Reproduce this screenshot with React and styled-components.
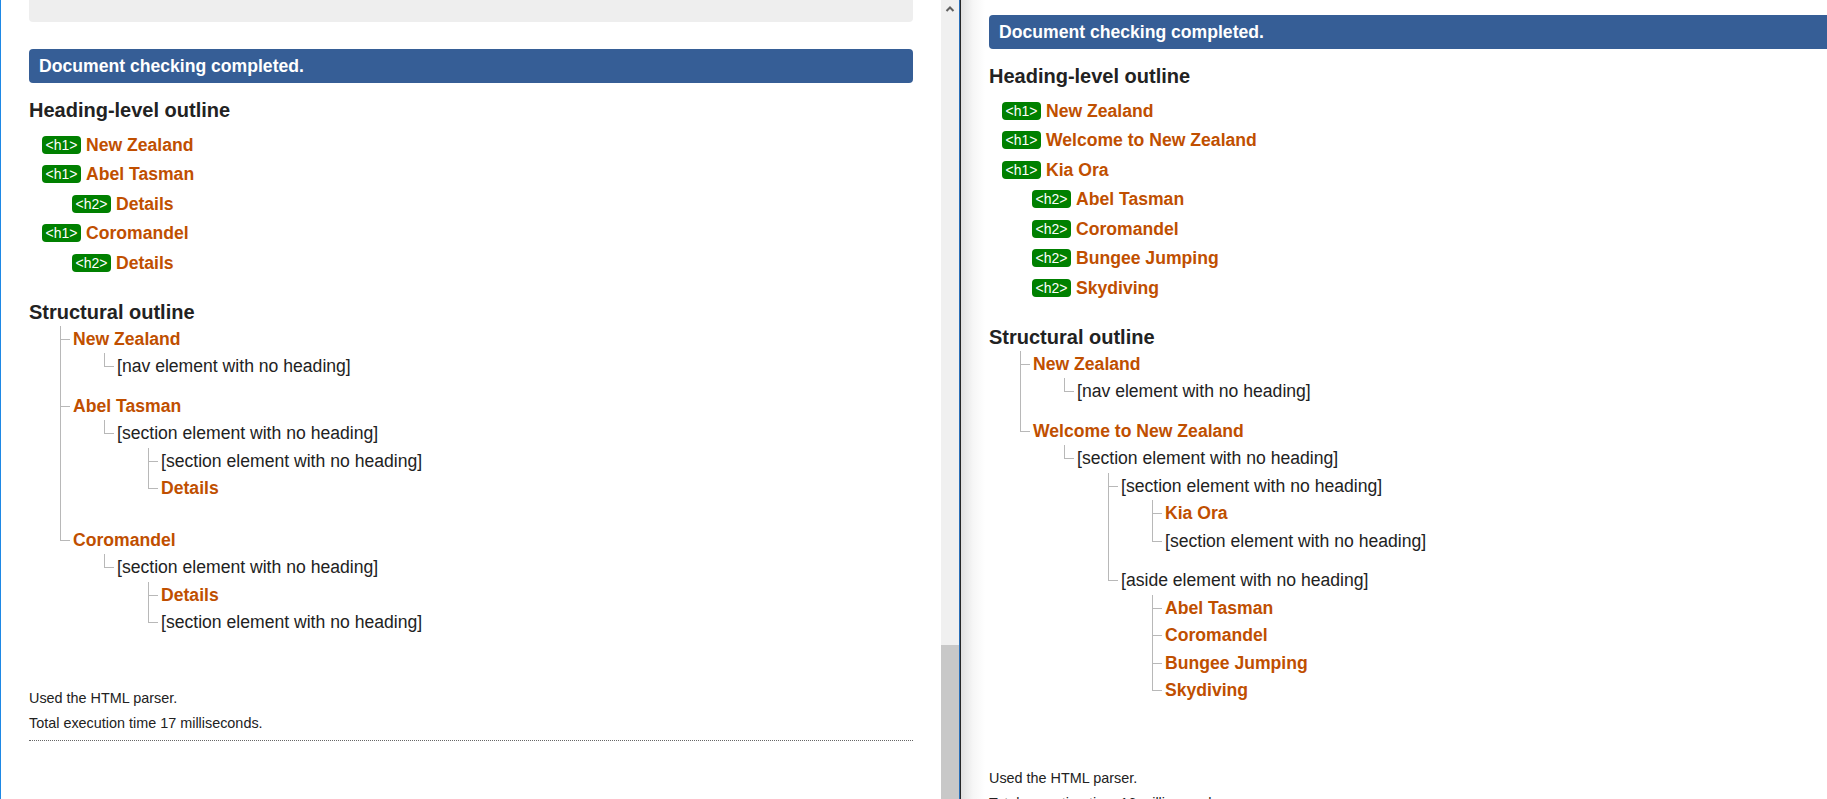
import styled, { createGlobalStyle } from "styled-components";

const leftHeadings = [
    { level: 1, text: "New Zealand" },
    { level: 1, text: "Abel Tasman" },
    { level: 2, text: "Details" },
    { level: 1, text: "Coromandel" },
    { level: 2, text: "Details" },
];

const rightHeadings = [
    { level: 1, text: "New Zealand" },
    { level: 1, text: "Welcome to New Zealand" },
    { level: 1, text: "Kia Ora" },
    { level: 2, text: "Abel Tasman" },
    { level: 2, text: "Coromandel" },
    { level: 2, text: "Bungee Jumping" },
    { level: 2, text: "Skydiving" },
];

const NO_SECTION = "[section element with no heading]";

const leftTree = [
    { h: "New Zealand", children: [{ t: "[nav element with no heading]" }] },
    {
        h: "Abel Tasman",
        children: [{ t: NO_SECTION, children: [{ t: NO_SECTION }, { h: "Details" }] }],
    },
    {
        h: "Coromandel",
        children: [{ t: NO_SECTION, children: [{ h: "Details" }, { t: NO_SECTION }] }],
    },
];

const rightTree = [
    { h: "New Zealand", children: [{ t: "[nav element with no heading]" }] },
    {
        h: "Welcome to New Zealand",
        children: [
            {
                t: NO_SECTION,
                children: [
                    { t: NO_SECTION, children: [{ h: "Kia Ora" }, { t: NO_SECTION }] },
                    {
                        t: "[aside element with no heading]",
                        children: [
                            { h: "Abel Tasman" },
                            { h: "Coromandel" },
                            { h: "Bungee Jumping" },
                            { h: "Skydiving" },
                        ],
                    },
                ],
            },
        ],
    },
];

function Tree({ items, root }) {
    return (
        <TreeList $root={root}>
            {items.map((item, i) => (
                <TreeItem key={i}>
                    <OutlineLabel $heading={!!item.h}>{item.h || item.t}</OutlineLabel>
                    {item.children && <Tree items={item.children} />}
                </TreeItem>
            ))}
        </TreeList>
    );
}

function Report({ headings, tree, time, bleed }) {
    return (
        <>
            <StatusBar $bleed={bleed}>Document checking completed.</StatusBar>

            <SectionTitle $top={15}>Heading-level outline</SectionTitle>
            <HeadingList>
                {headings.map((h, i) => (
                    <HeadingRow key={i} $level={h.level}>
                        <Badge>&lt;h{h.level}&gt;</Badge>
                        <HeadingText>{h.text}</HeadingText>
                    </HeadingRow>
                ))}
            </HeadingList>

            <SectionTitle $top={22}>Structural outline</SectionTitle>
            <Tree items={tree} root />

            <Footer>
                <p>Used the HTML parser.</p>
                <p>Total execution time {time} milliseconds.</p>
            </Footer>
        </>
    );
}

export default function App() {
    return (
        <Window>
            <GlobalStyle />

            <LeftFrame>
                <LeftDoc>
                    <PrevPanel />
                    <Report headings={leftHeadings} tree={leftTree} time={17} />
                </LeftDoc>
                <Scrollbar>
                    <ScrollArrow>
                        <svg width="10" height="8" viewBox="0 0 10 8">
                            <path d="M1.5 6 L5 2.5 L8.5 6" fill="none" stroke="#606060" strokeWidth="2" />
                        </svg>
                    </ScrollArrow>
                    <ScrollThumb />
                </Scrollbar>
            </LeftFrame>

            <Divider />

            <RightDoc>
                <Report headings={rightHeadings} tree={rightTree} time={16} bleed />
            </RightDoc>
        </Window>
    );
}

const GlobalStyle = createGlobalStyle`
    html, body {
        margin: 0;
        padding: 0;
        height: 100%;
        overflow: hidden;
        background: #fff;
    }

    body {
        font-family: "Liberation Sans", Arial, sans-serif;
        color: #222;
    }
`;

const Window = styled.div`
    display: flex;
    width: 100vw;
    height: 100vh;
    overflow: hidden;
`;

const LeftFrame = styled.div`
    display: flex;
    width: 959px;
    flex-shrink: 0;
`;

const LeftDoc = styled.div`
    flex: 1;
    border-left: 1px solid #1e88e5;
    padding: 0 28px;
    overflow: hidden;
`;

const Scrollbar = styled.div`
    width: 18px;
    background: #f0f0f0;
    display: flex;
    flex-direction: column;
`;

const ScrollArrow = styled.div`
    height: 17px;
    display: flex;
    align-items: center;
    justify-content: center;
`;

const ScrollThumb = styled.div`
    margin-top: auto;
    height: 154px;
    background: #c8c8c8;
`;

const Divider = styled.div`
    width: 1px;
    flex-shrink: 0;
    background: #2a6fb8;
`;

const RightDoc = styled.div`
    flex: 1;
    min-width: 0;
    border-left: 1px solid #262626;
    background: linear-gradient(to right, #e0e0e0, #f6f6f6 12px, #fff 24px);
    padding: 15px 0 0 28px;
    overflow: hidden;
`;

const PrevPanel = styled.div`
    height: 22px;
    background: #eeeeee;
    border-radius: 0 0 4px 4px;
    margin-bottom: 27px;
`;

const StatusBar = styled.div`
    height: 34px;
    display: flex;
    align-items: center;
    padding: 0 10px;
    margin-right: ${p => (p.$bleed ? "-10px" : "0")};
    background: #365e96;
    border-radius: 4px;
    color: #fff;
    font-size: 17.6px;
    font-weight: bold;
`;

const SectionTitle = styled.h2`
    margin: ${p => p.$top}px 0 0;
    font-size: 20px;
    line-height: 24px;
    font-weight: bold;
    color: #222;
`;

const HeadingList = styled.ul`
    list-style: none;
    margin: 8px 0 0;
    padding: 0;
`;

const HeadingRow = styled.li`
    display: flex;
    align-items: center;
    height: 29.5px;
    padding-left: ${p => (p.$level === 2 ? 43 : 13)}px;
`;

const Badge = styled.span`
    display: inline-flex;
    align-items: center;
    height: 18px;
    padding: 0 3.5px;
    margin-right: 5px;
    border-radius: 4px;
    background: #008000;
    color: #fff;
    font-size: 14px;
`;

const HeadingText = styled.span`
    color: #c04f00;
    font-size: 17.6px;
    line-height: 20px;
    font-weight: bold;
`;

const TreeList = styled.ol`
    list-style: none;
    margin: ${p => (p.$root ? "2px 0 0 31px" : "0 0 0 31px")};
    padding: 0 0 12px 0;
`;

const TreeItem = styled.li`
    position: relative;
    padding-left: 13px;
    font-size: 17.6px;
    line-height: 27.5px;

    &::before {
        content: "";
        position: absolute;
        left: 0;
        top: 0;
        width: 9px;
        height: 13px;
        border-left: 1px solid #b8b8b8;
        border-bottom: 1px solid #b8b8b8;
    }

    &:not(:last-child)::after {
        content: "";
        position: absolute;
        left: 0;
        top: 0;
        bottom: 0;
        border-left: 1px solid #b8b8b8;
    }
`;

const OutlineLabel = styled.span`
    color: ${p => (p.$heading ? "#c04f00" : "#222")};
    font-weight: ${p => (p.$heading ? "bold" : "normal")};
`;

const Footer = styled.div`
    margin-top: 15px;
    padding-bottom: 2px;
    border-bottom: 1px dotted #666;
    font-size: 14.4px;
    line-height: 20px;
    color: #222;

    p {
        margin: 0 0 5px;
    }
`;
